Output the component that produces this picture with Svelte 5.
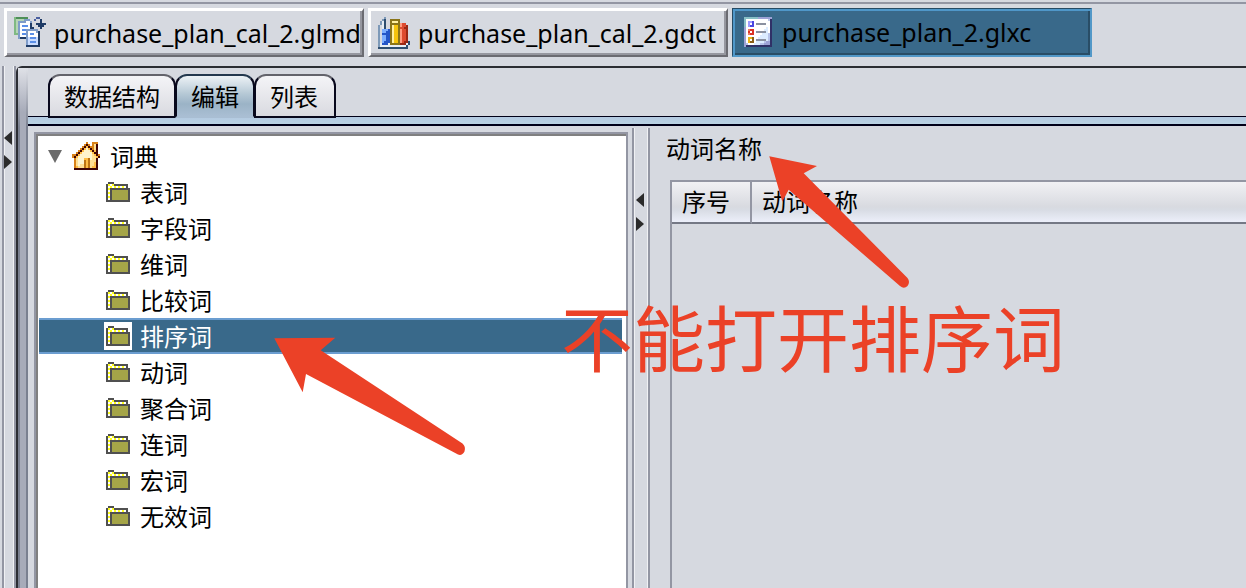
<script>
  const files = [
    { name: 'purchase_plan_cal_2.glmd', icon: 'model' },
    { name: 'purchase_plan_cal_2.gdct', icon: 'books' },
    { name: 'purchase_plan_2.glxc', icon: 'form' }
  ];
  const views = ['数据结构', '编辑', '列表'];
  const words = ['表词', '字段词', '维词', '比较词', '排序词', '动词', '聚合词', '连词', '宏词', '无效词'];
  const columns = ['序号', '动词名称'];

  let activeFile = $state(2);
  let activeView = $state(1);
  let selected = $state(4);

  // Small bitmaps: each letter is one cell, drawn two pixels wide.
  const art = {
    model: {
      colors: { g: '#4d8f58', l: '#7fb982', p: '#b5d4b5', n: '#1f3b66', m: '#7f9cc8', w: '#ffffff', b: '#5b8fe8', k: '#c9dcff', a: '#4a5fa0' },
      rows: [
        'lgggggg....aa...',
        'lppppmmm..a..n..',
        'lpmmmmwwm....n..',
        'lpmwwwwwn..nnnnn',
        'lpmwbbbwn...nnn.',
        'lpmwwwwwnn...n..',
        'lpmwbbmmmmmm....',
        'lpmwwwmwwwwmn...',
        'llmwbbmwbbwwn...',
        '..mwwwmwwwwwn...',
        '..mnnnmkbbbkn...',
        '......mkkkkkn...',
        '......mkbbbkn...',
        '......mkkkkkn...',
        '......nnnnnnn...'
      ]
    },
    books: {
      colors: { s: '#7d99b8', d: '#2e4e70', w: '#e7edf4', b: '#2455c8', c: '#7daeff', y: '#f5c40c', z: '#fff0a0', o: '#8a7418', r: '#dd4b30', q: '#ff9a80', m: '#9a2815' },
      rows: [
        '...s............',
        '..sd..ooooo.....',
        '.swd..ozzzo.....',
        '.swd..oooooqrr..',
        's.wd..ozyyoqrrm.',
        's.wd..ozyyorrmm.',
        's.cccbozyyoqrrm.',
        's.ccbbozyyoqrrm.',
        's.bbbbozyyoqrrm.',
        's.ccbbozyyoqrrm.',
        's.ccbbozyyoqrrm.',
        's.ccbbozyyoqrrm.',
        's.cbbbozyyoqrmmd',
        'swbbbwooooommmwd',
        'swwwwwwwwwwwwwd.',
        'ddddddddddddddd.'
      ]
    },
    form: {
      colors: { t: '#87bfc5', s: '#9da2d5', n: '#303167', w: '#ffffff', p: '#dcecff', l: '#b8c4ea', g: '#8b91a0', b: '#4a46e0', a: '#a09cff', r: '#dc3425', q: '#f07a60', y: '#e9b318', o: '#8a6018' },
      rows: [
        'tttttttsssssss',
        'twwwwwwwwwwwln',
        'twaabwwwwwwwwn',
        'twawbwgggggwwn',
        'twabbwwwwwwwwn',
        'swwwwwwwwwwpwn',
        'swqrrwwwwwppwn',
        'swrwrwgggggpwn',
        'swqrrwwwwpppln',
        'swwwwwwwppppln',
        'swyyowwpppppln',
        'swywowgggggpln',
        'swyoowpppplssn',
        'slwwwpppllsssn',
        'snnnnnnnnnnnnn'
      ]
    },
    house: {
      colors: { o: '#d98218', r: '#3f0505', y: '#fff4cc', z: '#ffdf92', b: '#bd7413', h: '#ffbd45' },
      rows: [
        '.......o..ooo.',
        '......oro.ozr.',
        '.....orhroozr.',
        '....orhyhrozr.',
        '...orhyyyhrhr.',
        '..orhyyyyyhrr.',
        'oorhyyyyyyzhro',
        'orhyyyyyyyzzhr',
        '.ozyyyhhbyzzr.',
        '.ozyyybhbzzzr.',
        '.ozyyybhbzzhr.',
        '.ozyzzbhbzzhr.',
        '.ohzzzbhbzhhr.',
        '.rrrrrrrrrrrr.'
      ]
    },
    folder: {
      colors: { k: '#505050', y: '#ffff20', w: '#ffffff', o: '#a5a548' },
      rows: [
        '.kkk........',
        'kywykkkkkkk.',
        'kwywywywywk.',
        'kykkkkkkkkkk',
        'kwkooooooook',
        'kykooooooook',
        'kwkooooooook',
        'kykooooooook',
        'kwkooooooook',
        'kkkkkkkkkkkk'
      ]
    }
  };
</script>

{#snippet pixels(name)}
  {@const a = art[name]}
  {@const w = Math.max(...a.rows.map((r) => r.length))}
  <svg class="pix" width={w * 2} height={a.rows.length * 2} viewBox="0 0 {w} {a.rows.length}" aria-hidden="true">
    {#each a.rows as row, y}
      {#each row as c, x}
        {#if a.colors[c]}<rect {x} {y} width="1" height="1" fill={a.colors[c]} />{/if}
      {/each}
    {/each}
  </svg>
{/snippet}

{#snippet grips()}
  <button class="grip" aria-label="collapse"><svg width="8" height="14" viewBox="0 0 8 14"><path d="M8 0V14L0 7Z" /></svg></button>
  <button class="grip" aria-label="expand"><svg width="8" height="14" viewBox="0 0 8 14"><path d="M0 0V14L8 7Z" /></svg></button>
{/snippet}

<div class="app">
  <nav class="files">
    {#each files as f, i}
      <button class="file" class:active={activeFile === i} onclick={() => (activeFile = i)}>
        <span class="icon">{@render pixels(f.icon)}</span>{f.name}
      </button>
    {/each}
  </nav>

  <div class="body">
    <div class="split outer">{@render grips()}</div>
    <div class="frame">
      <div class="bevel"></div>
      <main>
        <div class="views" role="tablist">
          {#each views as v, i}
            <button class="view" class:on={activeView === i} role="tab" aria-selected={activeView === i} onclick={() => (activeView = i)}>{v}</button>
          {/each}
        </div>
        <div class="band"></div>
        <div class="panes">
          <div class="tree">
            <button class="node root">
              <svg width="14" height="13" viewBox="0 0 14 13" aria-hidden="true"><path d="M0 0H14L7 13Z" fill="#6b6b6b" /></svg>
              {@render pixels('house')}
              <span>词典</span>
            </button>
            <ul>
              {#each words as w, i}
                <li>
                  <button class="node" class:selected={selected === i} onclick={() => (selected = i)}>
                    <span class="folder">{@render pixels('folder')}</span>
                    <span>{w}</span>
                  </button>
                </li>
              {/each}
            </ul>
          </div>
          <div class="split inner">{@render grips()}</div>
          <section class="detail">
            <h2>动词名称</h2>
            <div class="grid">
              <table>
                <thead><tr>{#each columns as c}<th>{c}</th>{/each}</tr></thead>
              </table>
            </div>
          </section>
        </div>
      </main>
    </div>
  </div>

  <svg class="mark first" width="144" height="136" viewBox="0 0 144 136" aria-hidden="true">
    <path d="M2.3 2.3L50 12L36.7 19.3L140.500 124Q143.500 128 140.500 132Q137 135.500 133 132L21.7 35.7L15.3 47.7Z" />
  </svg>
  <svg class="mark second" width="196" height="124" viewBox="0 0 196 124" aria-hidden="true">
    <path d="M2.3 4.3L63.3 3.7L48.7 16.3L190.5 109.5Q194 112.5 192.5 117.5Q190 122 186 120.5L34 40L30.7 58.3Z" />
  </svg>
  <p class="note">不能打开排序词</p>
</div>

<style>
  :global(body) { margin: 0; background: #d6d9e0; }
  .app {
    position: relative;
    display: flex;
    flex-direction: column;
    min-height: 100vh;
    overflow: hidden;
    box-sizing: border-box;
    padding-top: 2px;
    background: #d6d9e0;
    color: #000;
    font: 24px/36px 'Noto Sans CJK SC', sans-serif;
  }
  button { font: inherit; color: inherit; border: 0; padding: 0; margin: 0; background: none; text-align: left; }
  .pix { display: block; shape-rendering: crispEdges; flex: none; }

  .files { display: flex; gap: 4px; border-top: 2px solid #9396a3; padding: 4px 4px 9px; }
  .file {
    display: flex;
    align-items: center;
    box-sizing: border-box;
    width: 360px;
    height: 49px;
    padding-left: 7px;
    border-color: #fff #6b6b71 #6b6b71 #fff;
    border-width: 3px 2px 2px 3px;
    border-style: solid;
    box-shadow: inset -2px -2px #96979f;
    font-family: 'Noto Sans', sans-serif;
    font-size: 25px;
    white-space: nowrap;
  }
  .file .icon { width: 32px; height: 32px; margin-right: 8px; flex: none; }
  .file.active {
    background: #39698a;
    border: 1px solid #264a63;
    border-right: 2px solid #5298c8;
    border-bottom: 2px solid #5298c8;
    box-shadow: inset 2px 2px #4f97c9, inset -2px -2px #294d66;
    padding-left: 11px;
  }
  .file.active .icon { width: 30px; height: 30px; }

  .body { flex: 1; display: flex; }
  .split { display: flex; flex-direction: column; box-sizing: border-box; flex: none; gap: 10px; border: solid #9396a3; border-width: 0 2px; box-shadow: inset 1px 0 #f0f1f4, inset -1px 0 #f0f1f4; }
  .split.outer { width: 14px; margin-left: 2px; padding-top: 65px; }
  .split.inner { width: 18px; margin: 2px 0 0 4px; padding-top: 65px; padding-left: 2px; }
  .grip { height: 14px; display: flex; fill: #2b2b2b; }

  .frame { flex: 1; min-width: 0; display: flex; border: solid #2b2d33; border-width: 2px 0 0 2px; border-top-left-radius: 6px; }
  .bevel { width: 10px; flex: none; box-sizing: border-box; border: solid; border-width: 0 2px; border-image: linear-gradient(#e0e2e8, #7a8090 60px) 1; background: linear-gradient(#dfe1e7, #a7abb9 44px); }
  main { flex: 1; min-width: 0; display: flex; flex-direction: column; }
  .views { display: flex; padding: 6px 20px 0; border-bottom: 1px solid #000018; }
  .view {
    box-sizing: border-box;
    height: 44px;
    margin-bottom: -2px;
    margin-right: -1px;
    padding: 0 14px;
    border: 2px solid #08081c;
    border-top-color: #63636b;
    border-radius: 12px 12px 0 0;
    background: linear-gradient(#f4f4f7, #d9dae0);
    z-index: 1;
  }
  .view:last-child { padding-right: 16px; }
  .view.on { border-bottom-color: #a9bed3; border-top-color: #23384e; background: linear-gradient(#edf2f6, #b5c8d5 45%, #9bb3c6 70%, #a9bed3); }
  .band { height: 7px; background: linear-gradient(#b3c9e1, #bad3e3); border-bottom: 2px solid #000018; }
  .panes { flex: 1; display: flex; }

  .tree { flex: 0 1 594px; box-sizing: border-box; margin: 6px 0 0 6px; border: solid #9396a3; border-width: 2px 2px 0 2px; background: #fff; box-shadow: inset 2px 2px #808080; padding: 4px 4px 0 3px; }
  .tree ul { list-style: none; margin: 0; padding: 0; }
  .node { display: flex; align-items: center; width: 100%; height: 36px; box-sizing: border-box; padding-left: 65px; gap: 8px; }
  .root { padding-left: 9px; gap: 10px; }
  .folder { padding: 4px 2px; background: #fff; }
  .selected { color: #fff; background: #39698a; border: solid #6b9dd0; border-width: 2px 0; }

  .detail { flex: 1 1 0; min-width: 0; padding: 4px 0 0 16px; display: flex; flex-direction: column; }
  h2 { margin: 0; font: inherit; line-height: 36px; }
  .grid { flex: 1; margin: 14px 0 0 4px; border: solid #9396a3; border-width: 2px 0 0 2px; }
  table { width: 100%; border-collapse: separate; border-spacing: 0; table-layout: fixed; }
  th { box-sizing: border-box; height: 42px; padding: 0 0 2px 10px; font-weight: 400; text-align: left; border-bottom: 2px solid #747885; background: linear-gradient(#f1f1f4, #d8dae0 62%, #d8dce4 70%, #eceffa); }
  th:first-child { width: 80px; border-right: 2px solid #9396a3; }

  .mark { position: absolute; fill: #eb4127; pointer-events: none; }
  .first { left: 767px; top: 154px; }
  .second { left: 272px; top: 334px; }
  .note { position: absolute; left: 561px; top: 282px; margin: 0; font-size: 72px; line-height: 106px; color: #eb4127; white-space: nowrap; pointer-events: none; }
</style>
